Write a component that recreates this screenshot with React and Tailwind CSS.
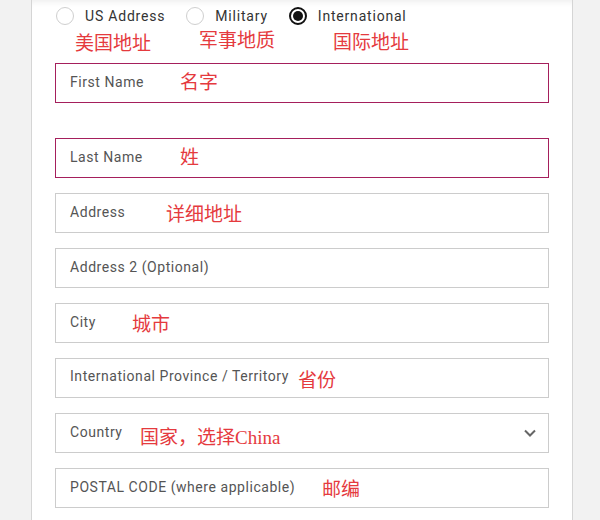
import React, { useState } from 'react';

const cn = '"Noto Sans CJK SC", sans-serif';

// 地址类型选项 + 中文备注
const addressTypes = [
  { value: 'us', label: 'US Address' },
  { value: 'military', label: 'Military' },
  { value: 'intl', label: 'International' },
];

const fields = [
  { label: 'First Name', note: '名字', noteLeft: 'left-[124px]', noteTop: 'top-[5px]', active: true, gapAfter: 'mb-[35px]' },
  { label: 'Last Name', note: '姓', noteLeft: 'left-[124px]', noteTop: 'top-[5px]', active: true },
  { label: 'Address', note: '详细地址', noteLeft: 'left-[110px]', noteTop: 'top-[7px]' },
  { label: 'Address 2 (Optional)' },
  { label: 'City', note: '城市', noteLeft: 'left-[76px]', noteTop: 'top-[7px]' },
  { label: 'International Province / Territory', note: '省份', noteLeft: 'left-[242px]', noteTop: 'top-[8px]', labelUp: true },
  { label: 'Country', note: '国家，选择', extra: 'China', noteLeft: 'left-[84px]', noteTop: 'top-[10px]', select: true },
  { label: 'POSTAL CODE (where applicable)', note: '邮编', noteLeft: 'left-[266px]', noteTop: 'top-[7px]' },
];

const Radio = ({ checked }) => (
  <span
    className={
      'w-[18px] h-[18px] rounded-full border flex items-center justify-center bg-white ' +
      (checked ? 'border-[#111] border-[2px]' : 'border-[#cfcfcf]')
    }
  >
    {checked && <span className="w-[10px] h-[10px] rounded-full bg-[#111]" />}
  </span>
);

const Field = ({ f }) => (
  <div
    className={
      'relative h-[40px] border flex items-center pl-[14px] ' +
      (f.active ? 'border-[#a51f5c] ' : 'border-[#cccccc] ') +
      (f.gapAfter || 'mb-[15px]')
    }
  >
    <span className={'text-[14px] text-[#555] tracking-[0.55px] ' + (f.labelUp ? 'pb-[4px]' : 'pb-[2px]')}>
      {f.label}
    </span>
    {f.note && (
      <span
        className={'absolute text-[19px] leading-[24px] text-[#e53a3e] whitespace-nowrap ' + f.noteLeft + ' ' + f.noteTop}
        style={{ fontFamily: cn }}
      >
        {f.note}
        {f.extra && <span style={{ fontFamily: '"Liberation Serif", serif' }}>{f.extra}</span>}
      </span>
    )}
    {f.select && (
      <svg className="absolute right-[11px] top-[14px]" width="14" height="10" viewBox="0 0 14 10" fill="none">
        <path d="M2 2.5 L7 7.5 L12 2.5" stroke="#666" strokeWidth="2" />
      </svg>
    )}
  </div>
);

const App = () => {
  const [type, setType] = useState('intl');

  return (
    <div className="w-[600px] h-[520px] bg-[#f2f2f2] overflow-hidden" style={{ fontFamily: 'Roboto, sans-serif' }}>
      <div className="ml-[31px] w-[542px] h-full bg-white border-x border-[#d5d5d5] px-[23px] pt-[7px] shadow-[inset_0_7px_6px_-5px_rgba(0,0,0,0.07)]">
        <div className="flex items-center gap-[21px] pl-[1px] h-[18px]">
          {addressTypes.map(t => (
            <button
              key={t.value}
              onClick={() => setType(t.value)}
              className="flex items-center gap-[11px] cursor-pointer"
            >
              <Radio checked={type === t.value} />
              <span className="text-[14px] text-[#333] tracking-[0.8px]">{t.label}</span>
            </button>
          ))}
        </div>

        <div className="flex items-start h-[30px] text-[19px] leading-[24px] text-[#e53a3e] mt-[2px] mb-[6px]" style={{ fontFamily: cn }}>
          <span className="ml-[20px] mt-[3px]">美国地址</span>
          <span className="ml-[48px]">军事地质</span>
          <span className="ml-[58px] mt-[2px]">国际地址</span>
        </div>

        {fields.map(f => (
          <Field key={f.label} f={f} />
        ))}
      </div>
    </div>
  );
};

export default App;
